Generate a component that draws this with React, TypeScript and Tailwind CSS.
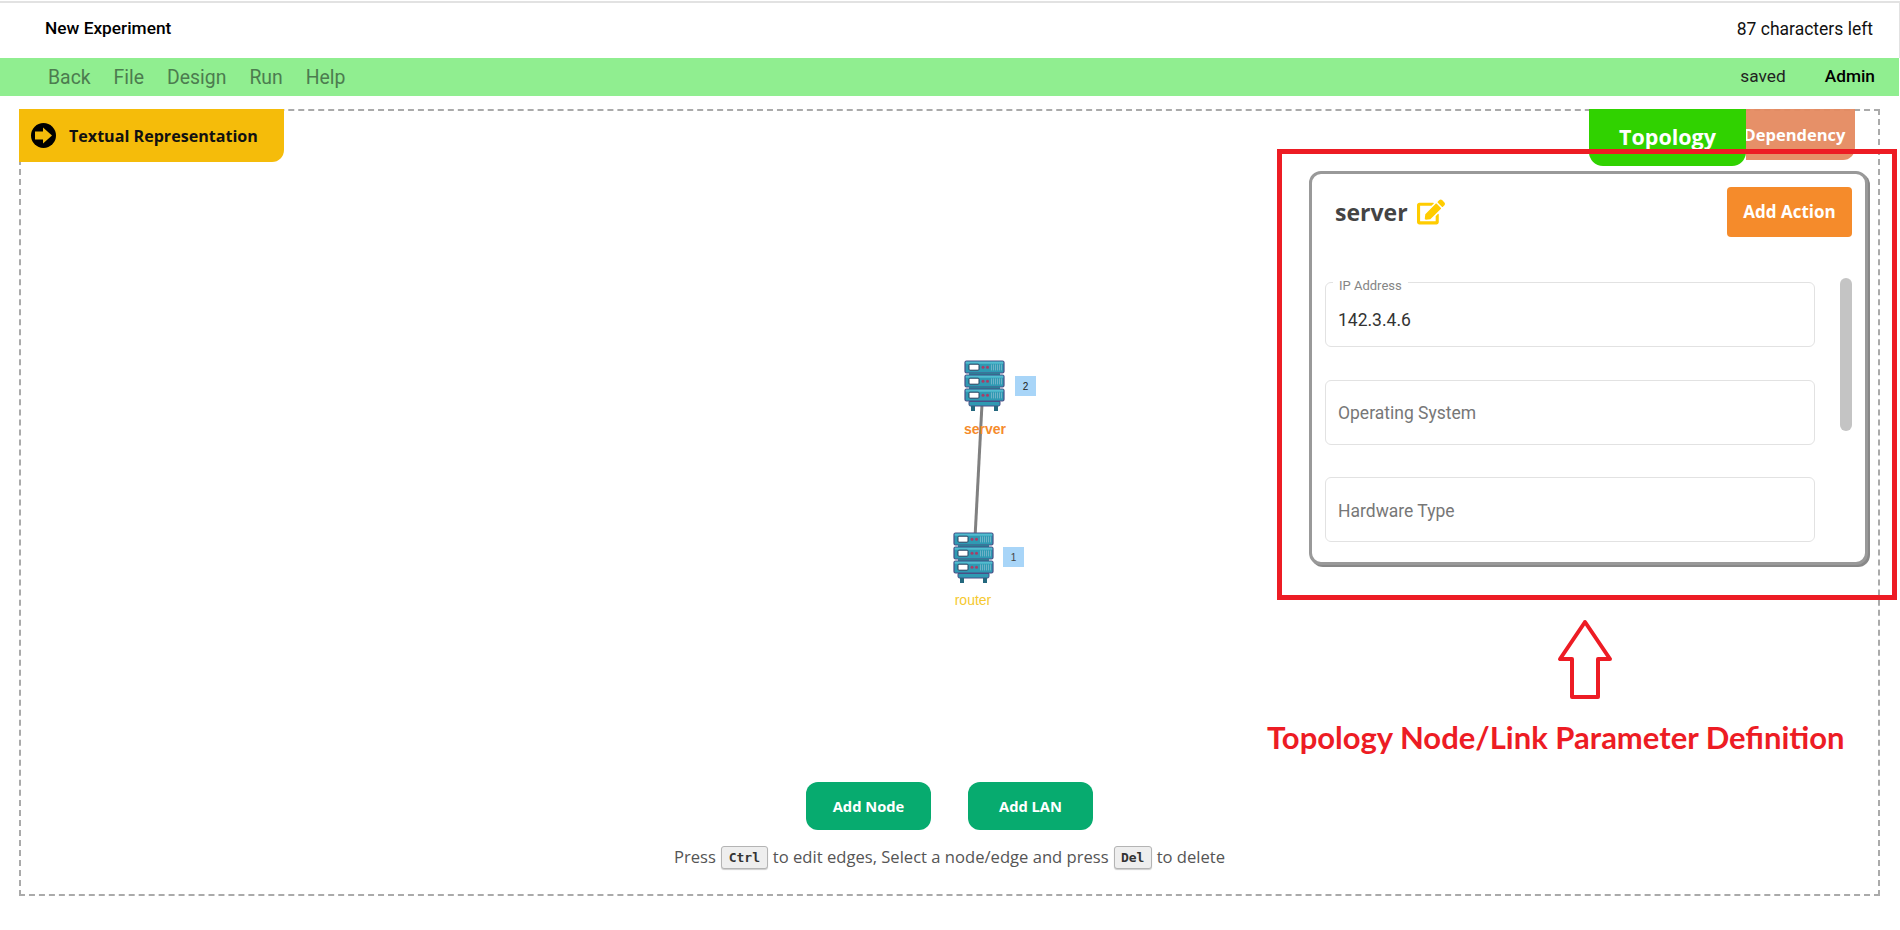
import { FaEdit } from "react-icons/fa";

function ServerIcon() {
  const unit = (y: number, key: number) => (
    <g key={key}>
      <rect x="1" y={y} width="39" height="12" rx="1.5" fill="#2f9ab3" stroke="#4a4f86" strokeWidth="1.2" />
      <rect x="1.7" y={y + 0.7} width="37.6" height="2" fill="#52bdd0" />
      <rect x="5" y={y + 3.2} width="10" height="6" rx="1" fill="#ffffff" stroke="#27405f" strokeWidth="1" />
      <circle cx="19" cy={y + 6.2} r="1.5" fill="#a83e68" />
      <circle cx="23.5" cy={y + 6.2} r="1.5" fill="#a83e68" />
      {[27, 29, 31, 33, 35, 37].map((x) => (
        <rect key={x} x={x} y={y + 3.4} width="1" height="6" fill="#6fb2c8" />
      ))}
    </g>
  );
  return (
    <svg viewBox="0 0 41 51" className="w-[41px] h-[51px] block">
      {unit(1, 1)}
      <rect x="5" y="13" width="31" height="2" fill="#2b7f96" />
      {unit(15, 2)}
      <rect x="5" y="27" width="31" height="2" fill="#2b7f96" />
      {unit(29, 3)}
      <path d="M5 41.5h31v3a1.5 1.5 0 0 1-1.5 1.5h-28a1.5 1.5 0 0 1-1.5-1.5z" fill="#2f9ab3" stroke="#4a4f86" strokeWidth="1" />
      <rect x="7" y="46" width="4" height="5" fill="#24687e" />
      <rect x="30" y="46" width="4" height="5" fill="#24687e" />
    </svg>
  );
}

function Field({ label, value, legend }: { label?: string; value?: string; legend?: string }) {
  return (
    <div className="relative h-[65px] w-[490px] shrink-0 rounded-[6px] border border-[#e2e2e2] flex items-center px-[12px] pt-[3px]">
      {legend && (
        <span className="absolute left-[7px] -top-[4px] bg-white px-[6px] text-[13px] leading-[14px] text-[#858585]">
          {legend}
        </span>
      )}
      {value ? (
        <span className="text-[17.5px] text-[#333333] pt-[8px]">{value}</span>
      ) : (
        <span className="text-[17.5px] text-[#777777]">{label}</span>
      )}
    </div>
  );
}

function Kbd({ children, w }: { children: string; w: string }) {
  return (
    <kbd
      className={`inline-flex h-[23px] items-center justify-center rounded-[3px] border border-[#b4b4b4] bg-[#eeeeee] shadow-[0_1px_1px_rgba(0,0,0,0.2)] mx-[5px] text-[13px] font-bold text-[#333333] align-middle ${w}`}
      style={{ fontFamily: '"DejaVu Sans Mono", monospace' }}
    >
      {children}
    </kbd>
  );
}

export default function App() {
  return (
    <div className="relative h-[930px] w-full overflow-hidden bg-white font-['Roboto',sans-serif]">
      <div className="mt-px h-[57px] border-t-2 border-r border-[#e2e2e2] flex items-center justify-between pl-[45px] pr-[26px] pb-[3px]">
        <span className="text-[17.3px] font-medium text-black">New Experiment</span>
        <span className="text-[17.5px] text-[#111111]">87 characters left</span>
      </div>

      <div className="h-[38px] bg-[#90ee90] flex items-center justify-between pl-[48px] pr-[24px] mr-px">
        <nav className="flex gap-[23px] text-[19.4px] text-[#4c7c4f] pt-[2px]">
          <span>Back</span>
          <span>File</span>
          <span>Design</span>
          <span>Run</span>
          <span>Help</span>
        </nav>
        <div className="flex items-center gap-[39px] text-[17.3px]">
          <span className="text-[#222222]">saved</span>
          <span className="font-medium text-black">Admin</span>
        </div>
      </div>

      <main className="relative mt-[13px] ml-[19px] h-[787px] w-[1861px] border-2 border-dashed border-[#aaaaaa] flex flex-col items-center justify-end pb-[24px]">
        <div className="absolute -left-[2px] -top-[2px] h-[53px] w-[265px] rounded-br-[12px] bg-[#f5bc0a] flex items-center pl-[12px] gap-[13px] font-['Open_Sans',sans-serif]">
          <svg viewBox="0 0 25 25" className="h-[25px] w-[25px] shrink-0">
            <circle cx="12.5" cy="12.5" r="12.5" fill="#000000" />
            <path d="M4 8.5h8V4.5l9 8-9 8v-4H4z" fill="#f5bc0a" />
          </svg>
          <span className="text-[16.1px] font-bold text-[#111111] pt-[1px]">Textual Representation</span>
        </div>

        <div className="absolute right-[23px] -top-[2px] flex items-start font-['Open_Sans',sans-serif] text-white font-bold">
          <div className="z-10 flex h-[57px] w-[157px] items-center justify-center rounded-b-[14px] bg-[#30d200] text-[21.5px]">
            Topology
          </div>
          <div className="flex h-[51px] w-[109px] items-center justify-center rounded-br-[12px] bg-[#e58a60]/95 text-[16.5px] whitespace-nowrap pr-[12px] pt-[1px]">
            Dependency
          </div>
        </div>

        <div className="absolute left-[1288px] top-[60px] h-[394px] w-[559px] overflow-hidden rounded-[12px] border-[3px] border-[#999999] bg-white shadow-[2px_2px_0_#888888] z-20">
          <div className="flex items-start justify-between pl-[23px] pr-[13px] pt-[13px]">
            <div className="flex h-[50px] items-center gap-[9px] font-['Open_Sans',sans-serif]">
              <span className="text-[23px] font-bold text-[#444444]">server</span>
              <FaEdit className="h-[26px] w-[28px] text-[#ffcc00]" />
            </div>
            <button className="h-[50px] w-[125px] rounded-[4px] bg-[#f58b2b] font-['Open_Sans',sans-serif] text-[17px] font-bold text-white">
              Add Action
            </button>
          </div>
          <div className="mt-[45px] ml-[13px] flex flex-col gap-[32.5px]">
            <Field legend="IP Address" value="142.3.4.6" />
            <Field label="Operating System" />
            <Field label="Hardware Type" />
          </div>
          <div className="absolute left-[528px] top-[104px] h-[153px] w-[12px] rounded-[6px] bg-[#c4c4c4]" />
        </div>

        <svg className="absolute left-[945px] top-[274px]" width="26" height="172" viewBox="0 0 26 172">
          <line x1="17" y1="0" x2="8" y2="172" stroke="#808080" strokeWidth="3" />
        </svg>

        <div className="absolute left-[943px] top-[249px]"><ServerIcon /></div>
        <div className="absolute left-[994px] top-[265px] flex h-[20px] w-[21px] items-center justify-center bg-[#a8d5f8] font-['Liberation_Sans',sans-serif] text-[10px] text-[#222222]">2</div>
        <div className="absolute left-[942px] top-[308px] w-[44px] text-center font-['Liberation_Sans',sans-serif] text-[14px] font-bold text-[#f58b2b]">server</div>

        <div className="absolute left-[932px] top-[421px]"><ServerIcon /></div>
        <div className="absolute left-[982px] top-[436px] flex h-[20px] w-[21px] items-center justify-center bg-[#a8d5f8] font-['Liberation_Sans',sans-serif] text-[10px] text-[#444444]">1</div>
        <div className="absolute left-[932px] top-[479px] w-[40px] text-center font-['Liberation_Sans',sans-serif] text-[14px] text-[#f5c92f]">router</div>

        <div className="flex gap-[37px] font-['Open_Sans',sans-serif]">
          <button className="h-[48px] w-[125px] rounded-[12px] bg-[#07ab6f] text-[14.7px] font-bold text-white">Add Node</button>
          <button className="h-[48px] w-[125px] rounded-[12px] bg-[#07ab6f] text-[14.7px] font-bold text-white">Add LAN</button>
        </div>
        <p className="mt-[15px] flex h-[25px] items-center font-['Open_Sans',sans-serif] text-[16.6px] text-[#555555]">
          Press<Kbd w="w-[47px]">Ctrl</Kbd>to edit edges, Select a node/edge and press<Kbd w="w-[38px]">Del</Kbd>to delete
        </p>
      </main>

      <div className="absolute left-[1277px] top-[149px] z-30 h-[451px] w-[620px] border-[5px] border-[#ed1c24]" />
      <svg className="absolute left-[1557px] top-[618px] z-30" width="56" height="82" viewBox="0 0 56 82">
        <path d="M28 4 L3 41 H15 V79 H41 V41 H53 Z" fill="#ffffff" stroke="#ed1c24" strokeWidth="4" strokeLinejoin="round" />
      </svg>
      <div className="absolute left-[1267px] top-[717px] z-30 whitespace-nowrap font-['Lato',sans-serif] text-[31px] leading-[40px] font-bold text-[#ed1c24]">
        Topology Node/Link Parameter Definition
      </div>
    </div>
  );
}
